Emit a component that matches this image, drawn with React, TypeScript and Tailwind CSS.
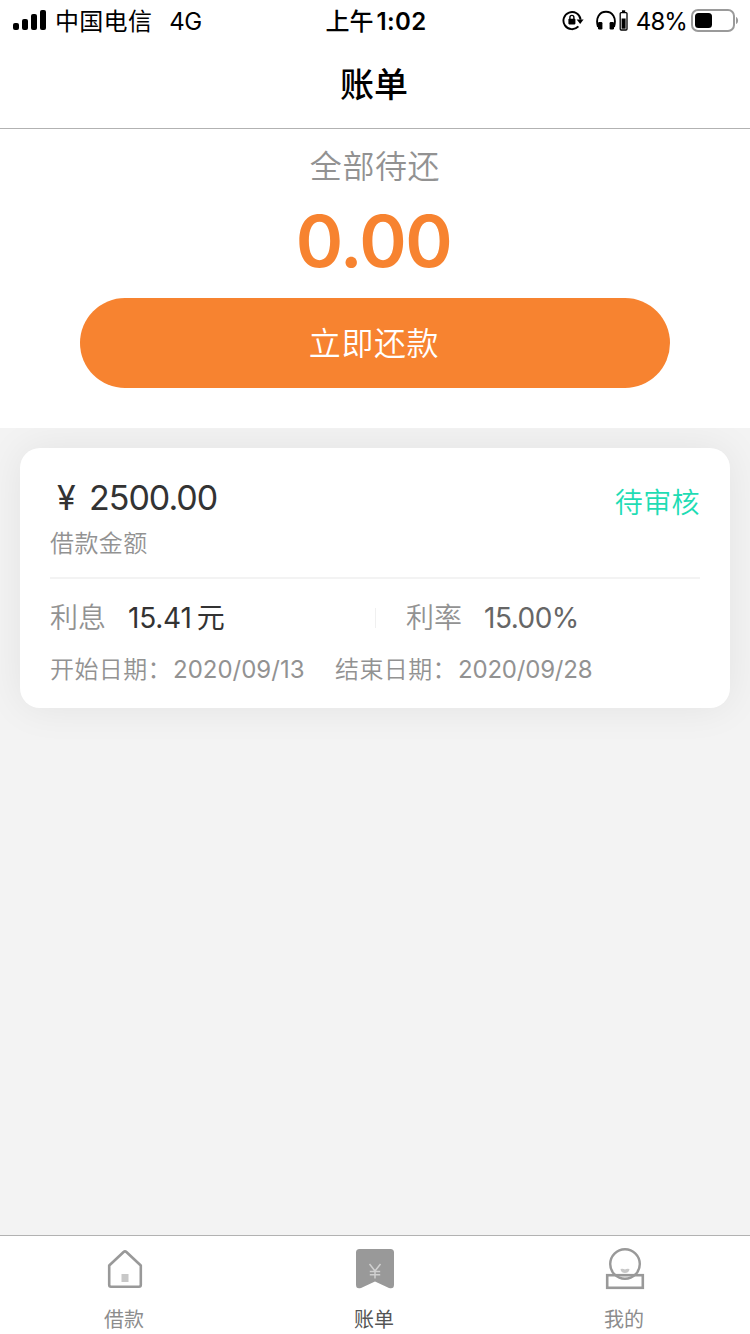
import type { ReactNode } from 'react'

interface Tab {
  id: string
  label: string
  icon: ReactNode
}

function SignalIcon() {
  return (
    <svg width="34" height="22" viewBox="0 0 34 22" fill="#000">
      <rect x="0" y="13" width="6" height="7" rx="2" />
      <rect x="9" y="9" width="6" height="11" rx="2" />
      <rect x="18" y="4" width="6" height="16" rx="2" />
      <rect x="27" y="0" width="6" height="20" rx="2" />
    </svg>
  )
}

function RotationLockIcon() {
  return (
    <svg width="22" height="22" viewBox="0 0 22 22" fill="none">
      <path d="M16.4 16.4A8.600 8.600 0 1 1 18.600 9.600" stroke="#000" strokeWidth="1.900" />
      <path d="M14.600 9.400H21.600L18.200 14Z" fill="#000" />
      <rect x="6.400" y="8.800" width="7" height="5.600" rx="0.800" fill="#000" />
      <path d="M7.900 9V7.400a2 2 0 0 1 4 0V9" stroke="#000" strokeWidth="1.400" />
    </svg>
  )
}

function HeadphonesIcon() {
  return (
    <svg width="32" height="22" viewBox="0 0 32 22" fill="none">
      <path d="M2 17C-1 7 4 1.800 10 1.800S21 7 18 17" stroke="#000" strokeWidth="1.900" />
      <rect x="2" y="12" width="4.400" height="7.500" rx="1.200" fill="#000" />
      <rect x="13.600" y="12" width="4.400" height="7.500" rx="1.200" fill="#000" />
      <rect x="24.200" y="2.600" width="6.800" height="17.400" rx="1" stroke="#000" strokeWidth="1.300" />
      <rect x="26" y="0.300" width="3.200" height="2" fill="#000" />
      <rect x="25.600" y="8.500" width="4" height="10.200" fill="#000" />
    </svg>
  )
}

function BatteryIcon() {
  return (
    <svg width="48" height="24" viewBox="0 0 48 24" fill="none">
      <rect x="1" y="1" width="42" height="21" rx="6" stroke="#9a9a9a" strokeWidth="2" />
      <rect x="4" y="4" width="17" height="15" rx="3.500" fill="#000" />
      <path d="M45 8c2.800 1 2.800 6 0 7z" fill="#9a9a9a" />
    </svg>
  )
}

function HomeIcon() {
  return (
    <svg width="40" height="42" viewBox="0 0 40 42" fill="none">
      <path
        d="M4.200 17.500 18.600 4Q20 2.700 21.400 4L35.800 17.500V37Q35.800 38.700 34 38.700H6Q4.200 38.700 4.200 37Z"
        stroke="#999"
        strokeWidth="2.600"
        strokeLinejoin="round"
      />
      <rect x="16.500" y="26" width="7" height="8" fill="#c8c8c8" />
    </svg>
  )
}

function BillIcon() {
  return (
    <svg width="40" height="42" viewBox="0 0 40 42" fill="none">
      <path
        d="M4.500 1H35.500Q39 1 39 4.500V36.500Q39 41.500 34 40L20 33.500 6 40Q1 41.500 1 36.500V4.500Q1 1 4.500 1Z"
        fill="#999"
      />
      <path d="M14.500 16l5.500 7 5.500-7M20 23v7.500M14.800 23.500h10.400M14.800 26.700h10.400" stroke="#d0d0d0" strokeWidth="1.500" />
    </svg>
  )
}

function MineIcon() {
  return (
    <svg width="40" height="42" viewBox="0 0 40 42" fill="none">
      <circle cx="20" cy="16" r="14.800" stroke="#999" strokeWidth="2.400" />
      <rect x="2.200" y="27.200" width="35.600" height="12.600" stroke="#999" strokeWidth="2.600" />
      <path d="M15.500 21q2.500-.8 4.500.6 2-1.400 4.500-.6-.5 4-4.500 4T15.500 21z" fill="#c8c8c8" />
    </svg>
  )
}

const tabs: Tab[] = [
  { id: 'loan', label: '借款', icon: <HomeIcon /> },
  { id: 'bill', label: '账单', icon: <BillIcon /> },
  { id: 'mine', label: '我的', icon: <MineIcon /> },
]

const activeTab = 'bill'

function StatusBar() {
  return (
    <div className="grid h-10 grid-cols-[1fr_auto_1fr] items-center pl-[13px] pr-[11px] text-[24px] leading-10 text-black">
      <div className="flex items-center">
        <SignalIcon />
        <span className="ml-2 pt-0.5 tracking-[0.3px]">中国电信</span>
        <span className="ml-[17px] pt-0.5 tracking-[-0.5px]">4G</span>
      </div>
      <div className="flex pt-0.5 font-medium">
        <span>上午</span>
        <span className="ml-[3px] font-semibold tracking-[0.4px]">1:02</span>
      </div>
      <div className="flex items-center justify-end">
        <RotationLockIcon />
        <span className="ml-3">
          <HeadphonesIcon />
        </span>
        <span className="ml-[8px] pt-px tracking-[-0.9px]">48%</span>
        <span className="ml-[4px]">
          <BatteryIcon />
        </span>
      </div>
    </div>
  )
}

function Summary() {
  return (
    <section className="relative z-10 flex h-[299px] flex-col items-center bg-white">
      <div className="mt-[13px] h-12 text-[32px] font-[350] leading-[49px] tracking-[0.6px] text-[#929292]">
        全部待还
      </div>
      <div className="mt-[7px] h-[88px] pr-[3px] text-[72px] font-semibold leading-[87px] tracking-[-1.5px] text-[#f78330]">
        0.00
      </div>
      <button className="mt-[13px] h-[90px] w-[590px] rounded-full bg-[#f78330] pr-0.5 text-[32px] font-[350] leading-[91px] tracking-[0.6px] text-white">
        立即还款
      </button>
    </section>
  )
}

function BillCard() {
  return (
    <article className="mx-5 mt-5 h-[260px] rounded-[20px] bg-white px-[30px] shadow-[0_0_40px_rgba(0,0,0,0.07)]">
      <div className="flex h-[129px] justify-between pt-[30px]">
        <div>
          <div className="flex h-10 text-[34px] leading-10 text-[#333]">
            <span className="w-[39px] pl-[7px]">¥</span>
            <span className="tracking-[-1px]">2500.00</span>
          </div>
          <div className="mt-[10px] h-8 text-[24px] font-[350] leading-8 tracking-[0.4px] text-[#929292]">借款金额</div>
        </div>
        <div className="mt-[5px] h-10 text-[28px] font-[350] leading-10 tracking-[0.4px] text-[#1fdcb4]">待审核</div>
      </div>
      <div className="h-0.5 bg-[#f3f3f3]" />
      <div className="mt-[19px] flex h-10 items-center text-[28px] leading-[42px]">
        <div className="flex w-[325px]">
          <span className="w-[78px] font-[350] text-[#929292]">利息</span>
          <span className="tracking-[-0.2px] text-[#333]">15.41</span>
          <span className="ml-[5px] text-[#333]">元</span>
        </div>
        <div className="h-5 w-px bg-[#f0f0f0]" />
        <div className="ml-[30px] flex">
          <span className="w-[78px] font-[350] text-[#929292]">利率</span>
          <span className="tracking-[-0.5px] text-[#666]">15.00%</span>
        </div>
      </div>
      <div className="mt-4 flex h-8 text-[24px] font-[350] leading-8 text-[#929292]">
        <span className="w-[123px] tracking-[0.4px]">{'开始日期\uFF1A'}</span>
        <span className="w-[162px] font-normal">2020/09/13</span>
        <span className="w-[123px] tracking-[0.4px]">{'结束日期\uFF1A'}</span>
        <span className="font-normal tracking-[-0.2px]">2020/09/28</span>
      </div>
    </article>
  )
}

function TabBar() {
  return (
    <nav className="grid h-[99px] grid-cols-3 border-t border-[#b2b2b2] bg-white">
      {tabs.map((tab) => (
        <button key={tab.id} className="flex flex-col items-center pt-3">
          {tab.icon}
          <span
            className={
              tab.id === activeTab
                ? 'mt-[14px] pr-0.5 text-[20px] leading-8 text-[#555]'
                : 'mt-[14px] pr-0.5 text-[20px] leading-8 text-[#8c8c8c]'
            }
          >
            {tab.label}
          </span>
        </button>
      ))}
    </nav>
  )
}

export default function App() {
  return (
    <div className="flex h-[1334px] w-[750px] flex-col overflow-hidden bg-[#f3f3f3] font-['Inter','Noto_Sans_CJK_SC',sans-serif]">
      <header className="h-[129px] border-b border-[#b2b2b2] bg-white">
        <StatusBar />
        <h1 className="h-[88px] pr-0.5 text-center text-[34px] font-medium leading-[90px] text-black">账单</h1>
      </header>
      <main className="flex-1">
        <Summary />
        <BillCard />
      </main>
      <TabBar />
    </div>
  )
}
